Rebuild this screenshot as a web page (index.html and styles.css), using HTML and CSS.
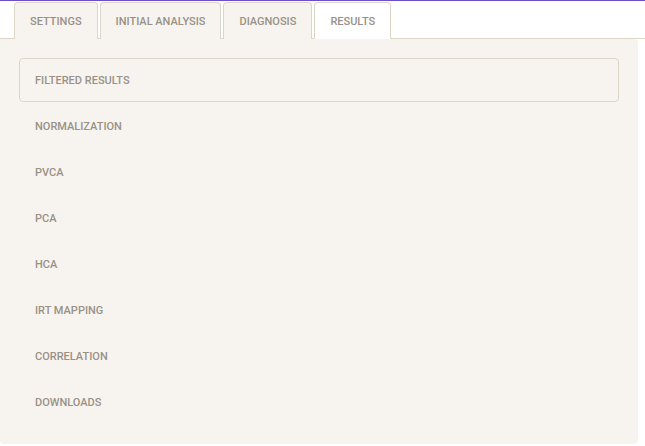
FILE: index.html
```html
<!DOCTYPE html>
<html>
<head>
<meta charset="utf-8">
<link rel="stylesheet" href="styles.css">
</head>
<body>
<div class="topline"></div>
<div class="tabs">
  <div class="tab">SETTINGS</div>
  <div class="tab">INITIAL ANALYSIS</div>
  <div class="tab">DIAGNOSIS</div>
  <div class="tab active">RESULTS</div>
</div>
<div class="panel">
  <div class="item selected">FILTERED RESULTS</div>
  <div class="item">NORMALIZATION</div>
  <div class="item">PVCA</div>
  <div class="item">PCA</div>
  <div class="item">HCA</div>
  <div class="item">IRT MAPPING</div>
  <div class="item">CORRELATION</div>
  <div class="item">DOWNLOADS</div>
</div>
</body>
</html>
```
FILE: styles.css
```css
html, body {
  margin: 0;
  padding: 0;
  background: #ffffff;
  font-family: Roboto, "Liberation Sans", sans-serif;
}
.topline {
  height: 1px;
  background: #6a4fc8;
}
.tabs {
  display: flex;
  gap: 2px;
  padding: 1px 0 0 14px;
  border-bottom: 1px solid #ddd5c8;
  height: 36px;
}
.tab {
  display: flex;
  align-items: center;
  padding: 0 15px;
  margin-bottom: -1px;
  background: #f7f4ef;
  border: 1px solid #ddd5c8;
  border-bottom: none;
  border-radius: 4px 4px 0 0;
  font-size: 11px;
  font-weight: 500;
  color: #999187;
}
.tab.active {
  background: #ffffff;
}
.panel {
  width: 600px;
  background: #f7f4ef;
  border-radius: 0 4px 4px 4px;
  padding: 19px 19px 18px 19px;
}
.item {
  height: 42px;
  display: flex;
  align-items: center;
  padding-left: 15px;
  border: 1px solid transparent;
  border-radius: 4px;
  margin-bottom: 2px;
  font-size: 11px;
  font-weight: 500;
  color: #999187;
}
.item.selected {
  border-color: #ddd5c8;
}
```
